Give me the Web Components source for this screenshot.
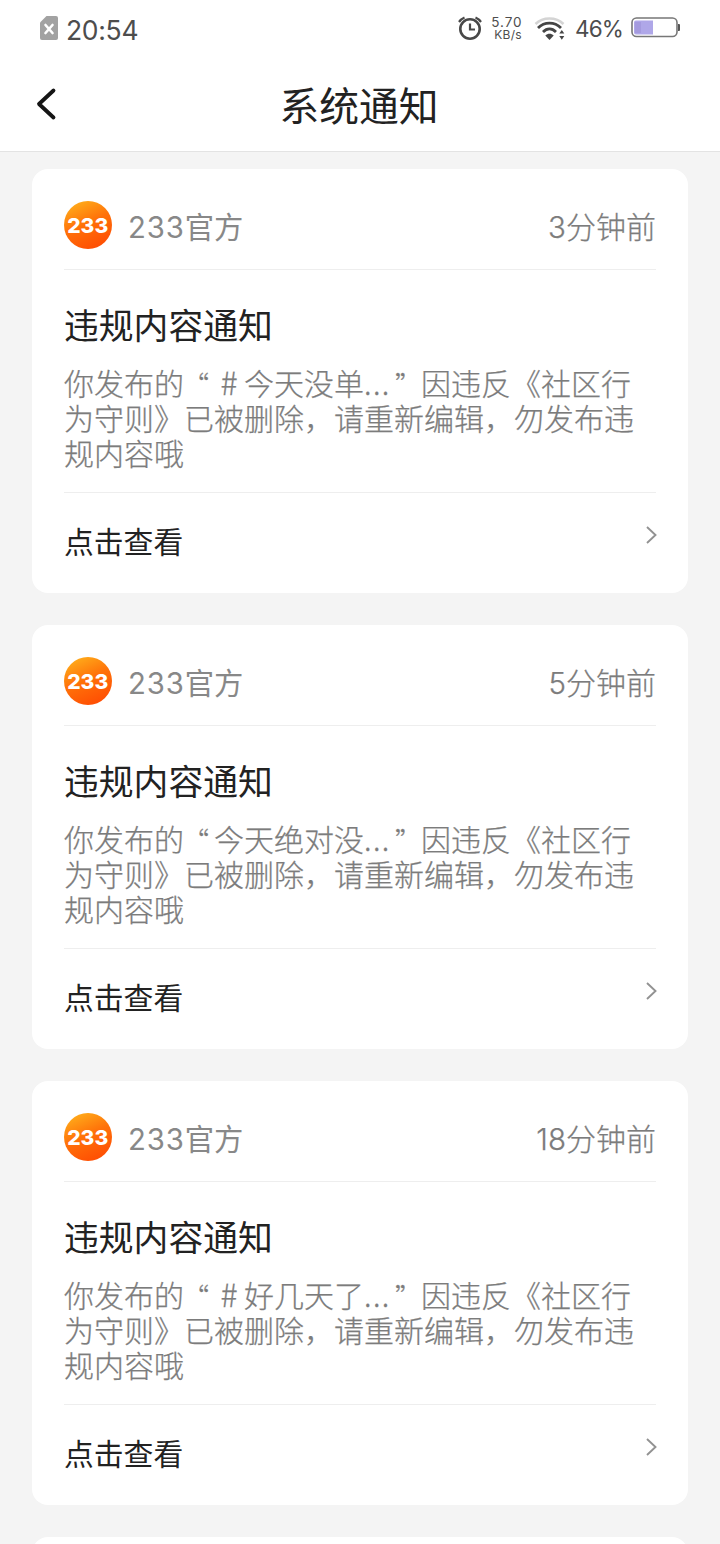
<!DOCTYPE html>
<html lang="zh-CN">
<head>
<meta charset="utf-8">
<meta name="viewport" content="width=device-width">
<title>系统通知</title>
<style>
html,body{margin:0;height:100%;background:#f4f4f4;overflow:hidden}
body{font-family:Inter,"Noto Sans CJK SC",sans-serif;text-spacing-trim:space-all;color:#222}
</style>
</head>
<body>
<notice-app></notice-app>
<script>
function define(name, html, setup) {
  const t = document.createElement('template');
  t.innerHTML = html;
  customElements.define(name, class extends HTMLElement {
    constructor() {
      super();
      this.attachShadow({mode: 'open'}).append(t.content.cloneNode(true));
      if (setup) setup(this);
    }
  });
}

define('status-bar', `
<style>
:host{display:flex;height:56px;padding:0 40px 0 39px;align-items:center;color:#4d4d4d;box-sizing:border-box}
svg{display:block;flex:none}
.time{font-size:26.5px;line-height:32px;margin:3px auto 0 7px;letter-spacing:-.3px}
.speed{display:flex;flex-direction:column;align-items:flex-end;font-size:13.5px;line-height:13px;width:33px;margin:1px 0 0 6px;white-space:nowrap}
.speed b{font-weight:400;letter-spacing:.9px;margin-right:-.4px;line-height:12px}
.speed i{font-style:normal;font-size:12px;letter-spacing:.3px;line-height:13px}
.pct{font-size:22.500px;line-height:28px;margin:2px 0 0 9px;width:48px;letter-spacing:-.9px;white-space:nowrap}
</style>
<svg width="20" height="26" viewBox="0 0 20 26"><path d="M7.5 1H17a2 2 0 0 1 2 2v20a2 2 0 0 1-2 2H3a2 2 0 0 1-2-2V7.500z" fill="#a2a2a2"/><path d="M6.500 10l7 8m0-8-7 8" stroke="#fff" stroke-width="2.600" stroke-linecap="round"/></svg>
<span class="time">20:54</span>
<svg width="26" height="26" viewBox="0 0 26 26" fill="none" stroke="#484848"><circle cx="13" cy="14" r="9.700" stroke-width="2.600"/><path d="M13 8.500v6h5" stroke-width="2.200"/><path d="M2 7A13 13 0 0 1 7.500 2.500M18.500 2.500a13 13 0 0 1 5.500 4.500" stroke-width="2.200"/></svg>
<span class="speed"><b>5.70</b><i>KB/s</i></span>
<svg width="32" height="26" viewBox="0 0 32 26" fill="none" style="margin-left:12px"><path d="M1.500 9C9 1.500 22 1.500 29.500 9" stroke="#d4d4d4" stroke-width="2.500"/><path d="M4 13C10.500 6.500 20.500 6.500 27 13M9 17c4-4 9-4 13 0" stroke="#454545" stroke-width="2.800"/><path d="M11.300 20.500c2.500-2.500 5.900-2.500 8.400 0l-4.200 4.500z" fill="#454545"/><path d="M25.300 18.500l2.500-3.500 2.500 3.500zm0 2.500h5l-2.500 3.700z" fill="#454545"/></svg>
<span class="pct">46%</span>
<svg width="49" height="22" viewBox="0 0 49 22" style="margin-left:8px"><rect x="1" y="1" width="45" height="18.500" rx="4.500" fill="#fff" stroke="#777" stroke-width="1.600"/><path d="M5 3.500H22v14H5a2 2 0 0 1-2-2v-10a2 2 0 0 1 2-2z" fill="#afa7e8"/><path d="M4 5h6v11H4z" fill="#a49ade"/><path d="M47 7h1a1 1 0 0 1 1 1v5a1 1 0 0 1-1 1h-1z" fill="#555"/></svg>`);

define('title-bar', `
<style>
:host{display:grid;grid-template-columns:100px 1fr 102px;align-items:center;height:96px;box-sizing:border-box;border-bottom:1px solid #e3e3e3}
svg{display:block;margin:0 0 0 34px}
h1{margin:7px 0 0;font-size:39.800px;font-weight:400;line-height:56px;text-align:center;color:#222}
</style>
<svg width="26" height="36" viewBox="0 0 26 36"><path d="M19.500 4.500L5 18l14.500 13.500" fill="none" stroke="#151515" stroke-width="3.800" stroke-linecap="round" stroke-linejoin="round"/></svg>
<h1><slot></slot></h1>`);

define('brand-avatar', `
<style>:host{display:block;width:48px;height:48px}svg{display:block}</style>
<svg width="48" height="48" viewBox="0 0 48 48"><defs><linearGradient id="g" x1=".15" y1="0" x2=".6" y2="1"><stop stop-color="#ffb21c"/><stop offset=".5" stop-color="#ff7209"/><stop offset="1" stop-color="#ff4f03"/></linearGradient></defs><circle cx="24" cy="24" r="24" fill="url(#g)"/><text x="3.200" y="31.500" textLength="41" lengthAdjust="spacingAndGlyphs" font-family="Inter,sans-serif" font-weight="800" font-size="20.500" fill="#fff">233</text></svg>`);

define('notice-card', `
<style>
:host{display:block;background:#fff;border-radius:16px;padding:0 32px;height:424px;box-sizing:border-box}
header{display:flex;height:100px;padding:32px 0 20px;box-sizing:border-box;align-items:center;color:#888}
.name{font-size:29.300px;line-height:40px;margin:5px auto 0 16px}
.name b{font-weight:400;font-size:29.300px;letter-spacing:.9px}
.time{font-size:30px;line-height:40px;margin-top:3px;font-weight:300;color:#7c7c7c;-webkit-text-stroke:.25px #7c7c7c}
.time span{font-size:29.500px}
section{height:224px;box-sizing:border-box;padding-top:31px;border:solid #eee;border-width:1px 0}
h2{margin:0;font-size:34.800px;line-height:50px;font-weight:400;color:#222}
p{margin:14px 0 0;font-family:"Noto Sans CJK SC",sans-serif;font-size:30px;line-height:35px;font-weight:300;color:#7c7c7c;-webkit-text-stroke:.25px #7c7c7c;white-space:nowrap}
p span{display:block}
footer{display:flex;height:100px;align-items:center;justify-content:space-between;font-size:29.800px;line-height:44px;color:#222}
footer span{margin-top:-2px}
footer svg{display:block;margin:-16px -2px 0 0}
</style>
<header><brand-avatar></brand-avatar><span class="name"><b>233</b>官方</span><span class="time"><span class="num"></span>分钟前</span></header>
<section><h2>违规内容通知</h2><p><slot></slot><span>为守则》已被删除，请重新编辑，勿发布违</span><span>规内容哦</span></p></section>
<footer><span>点击查看</span><svg width="14" height="20" viewBox="0 0 14 20"><path d="M3 2l8.500 8L3 18" fill="none" stroke="#929292" stroke-width="1.900"/></svg></footer>`,
el => { el.shadowRoot.querySelector('.num').textContent = el.getAttribute('minutes') || ''; });

define('quote-line', `
<style>
:host{display:flex;height:35px}
.open,.close{flex:none;box-sizing:border-box;width:30px;font-size:26px;line-height:38px}
.open{text-indent:-1px}
.close{width:29px;padding-left:3px}
.dots{flex:none;width:28px;letter-spacing:1.400px}
::slotted(i){display:inline-block;width:30px;text-align:center;font-style:normal;font-size:32px;line-height:30px}
</style>
<span>你发布的</span><span class="open">“</span><span><slot></slot></span><span class="dots">...</span><span class="close">”</span><span>因违反《社区行</span>`);

define('blank-card', `<style>:host{display:block;flex:none;height:424px;background:#fff;border-radius:16px}</style>`);

define('notice-app', `
<style>
:host{display:flex;flex-direction:column;height:1544px;overflow:hidden}
.top{background:#fff;flex:none}
main{display:flex;flex-direction:column;gap:32px;padding:17px 32px 0}
notice-card{flex:none}
</style>
<div class="top"><status-bar></status-bar><title-bar>系统通知</title-bar></div>
<main>
<notice-card minutes="3"><quote-line><i>#</i>今天没单</quote-line></notice-card>
<notice-card minutes="5"><quote-line>今天绝对没</quote-line></notice-card>
<notice-card minutes="18"><quote-line><i>#</i>好几天了</quote-line></notice-card>
<blank-card></blank-card>
</main>`);
</script>
</body>
</html>
